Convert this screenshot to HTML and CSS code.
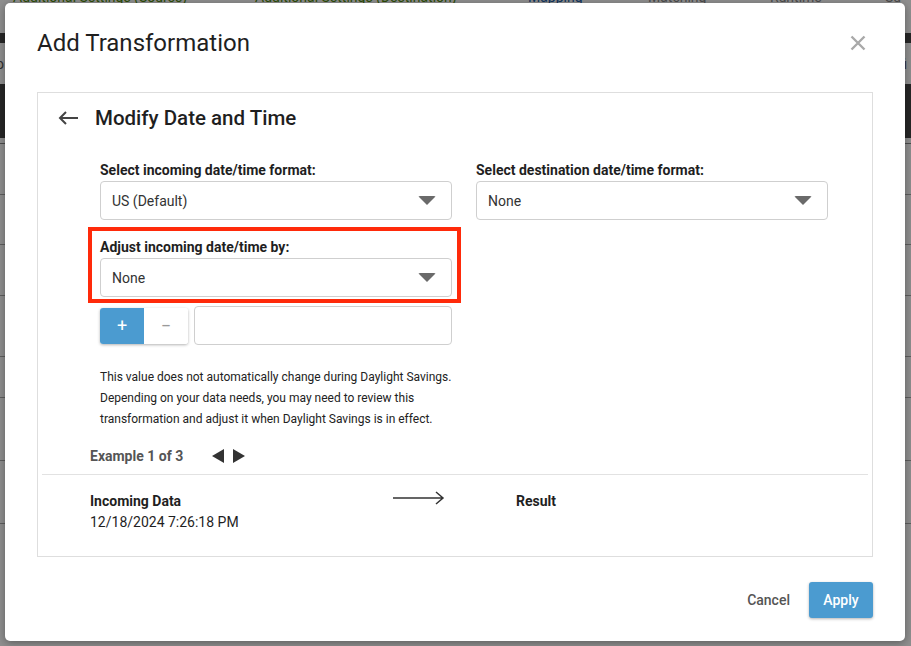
FILE: index.html
```html
<!DOCTYPE html>
<html>
<head>
<meta charset="utf-8">
<link rel="stylesheet" href="styles.css">
</head>
<body>
<div class="page">
  <div class="tabs">
    <span class="tab tab-green t1">Additional Settings (Source)</span>
    <span class="tab tab-green t2">Additional Settings (Destination)</span>
    <span class="tab tab-blue t3">Mapping</span>
    <span class="tab tab-gray t4">Matching</span>
    <span class="tab tab-gray t5">Runtime</span>
    <span class="tab tab-gray t6">Su</span>
  </div>
  <div class="darkbar thin"></div>
  <div class="subrow"><span>o</span><span>fi</span></div>
  <div class="darkbar thick"></div>
  <div class="rows">
    <div class="row r1"></div>
    <div class="row r2"></div>
    <div class="row r3"></div>
    <div class="row r4"></div>
    <div class="row r5"></div>
    <div class="row r6"></div>
    <div class="row r7"></div>
    <div class="row r8"></div>
  </div>
</div>
<div class="overlay"></div>

<div class="modal">
  <div class="modal-header">
    <h1 class="modal-title">Add Transformation</h1>
    <button class="close-btn" aria-label="Close">
      <svg width="16" height="16" viewBox="0 0 16 16"><path d="M1.5 1.5 L14.5 14.5 M14.5 1.5 L1.5 14.5" stroke="#a9a9a9" stroke-width="2.4" fill="none"/></svg>
    </button>
  </div>

  <div class="card">
    <div class="card-head">
      <svg class="back" width="21" height="14" viewBox="0 0 21 14"><path d="M20 7 H2 M8 1 L2 7 L8 13" stroke="#444" stroke-width="2" fill="none"/></svg>
      <h2 class="card-title">Modify Date and Time</h2>
    </div>

    <div class="form">
      <div class="col">
        <div class="field">
          <label class="lbl">Select incoming date/time format:</label>
          <div class="select"><span>US (Default)</span><i class="caret"></i></div>
        </div>
        <div class="field highlight-wrap">
          <label class="lbl">Adjust incoming date/time by:</label>
          <div class="select"><span>None</span><i class="caret"></i></div>
          <div class="highlight"></div>
        </div>
        <div class="adjust-row">
          <div class="toggle">
            <span class="tg tg-on">+</span>
            <span class="tg tg-off">−</span>
          </div>
          <div class="input"></div>
        </div>
        <p class="help">This value does not automatically change during Daylight Savings. Depending on your data needs, you may need to review this transformation and adjust it when Daylight Savings is in effect.</p>
      </div>
      <div class="col">
        <div class="field">
          <label class="lbl">Select destination date/time format:</label>
          <div class="select"><span>None</span><i class="caret"></i></div>
        </div>
      </div>
    </div>

    <div class="example">
      <span class="ex-label">Example 1 of 3</span>
      <span class="ex-nav">
        <svg width="12" height="14" viewBox="0 0 12 14"><path d="M12 0 V14 L0 7 Z" fill="#333"/></svg>
        <svg width="12" height="14" viewBox="0 0 12 14"><path d="M0 0 V14 L12 7 Z" fill="#333"/></svg>
      </span>
    </div>

    <div class="divider"></div>

    <div class="data-row">
      <div class="data-col incoming">
        <div class="data-title">Incoming Data</div>
        <div class="data-value">12/18/2024 7:26:18 PM</div>
      </div>
      <svg class="long-arrow" width="52" height="14" viewBox="0 0 52 14"><path d="M0 7 H50 M43 1 L50 7 L43 13" stroke="#333" stroke-width="1.5" fill="none"/></svg>
      <div class="data-col">
        <div class="data-title">Result</div>
      </div>
    </div>
  </div>

  <div class="modal-footer">
    <button class="btn-cancel">Cancel</button>
    <button class="btn-apply">Apply</button>
  </div>
</div>
</body>
</html>
```

FILE: styles.css
```css
* { box-sizing: border-box; }
html, body { margin: 0; padding: 0; }
body {
  width: 911px;
  height: 646px;
  overflow: hidden;
  font-family: Roboto, "Liberation Sans", Arial, sans-serif;
  position: relative;
  background: #fff;
}

/* background page */
.page { width: 911px; }
.tabs {
  height: 33px;
  position: relative;
  overflow: hidden;
}
.tab {
  position: absolute;
  top: -12px;
  font-size: 14px;
  line-height: 18px;
  white-space: nowrap;
}
.tab-green { color: #4e8a0a; }
.tab-blue { color: #1d5fa8; }
.tab-gray { color: #888; }
.t1 { left: 13px; }
.t2 { left: 255px; }
.t3 { left: 528px; }
.t4 { left: 648px; }
.t5 { left: 770px; }
.t6 { left: 885px; }
.darkbar { background: #454545; }
.darkbar.thin { height: 10px; }
.darkbar.thick { height: 54px; }
.subrow {
  height: 41px;
  display: flex;
  justify-content: space-between;
  align-items: center;
  padding: 0 4px 0 0;
  font-size: 14px;
  color: #555;
  margin-left: -4px;
}
.row { border-bottom: 1px solid #aaa; }
.r1 { height: 6px; border-bottom: 1px solid #888; }
.r2 { height: 51px; }
.r3 { height: 50px; }
.r4 { height: 51px; }
.r5 { height: 61px; }
.r6 { height: 41px; }
.r7 { height: 63px; }
.r8 { height: 63px; }

.overlay {
  position: absolute;
  inset: 0;
  background: rgba(0, 0, 0, 0.44);
}

/* modal */
.modal {
  position: absolute;
  left: 5px;
  top: 3px;
  width: 900px;
  height: 638px;
  background: #fff;
  border-radius: 5px;
  box-shadow: 0 2px 8px rgba(0,0,0,0.35);
  display: flex;
  flex-direction: column;
}
.modal-header {
  display: flex;
  align-items: center;
  justify-content: space-between;
  padding: 25px 39px 0 32px;
  height: 54px;
}
.modal-title {
  margin: 0;
  font-size: 24px;
  font-weight: 400;
  line-height: 30px;
  color: #1f1f1f;
}
.close-btn {
  border: 0;
  background: none;
  padding: 0;
  width: 16px;
  height: 16px;
  display: flex;
}

.card {
  margin: 35px 32px 0 32px;
  border: 1px solid #dedede;
  height: 465px;
  display: flex;
  flex-direction: column;
}
.card-head {
  display: flex;
  align-items: center;
  height: 28px;
  margin-top: 11px;
  padding-left: 20px;
}
.back { margin-right: 16px; }
.card-title {
  margin: 0;
  font-size: 20.5px;
  font-weight: 500;
  color: #1f1f1f;
  line-height: 28px;
}

.form {
  display: grid;
  grid-template-columns: 352px 352px;
  column-gap: 24px;
  padding-left: 62px;
  margin-top: 30px;
}
.col { display: flex; flex-direction: column; }
.field { display: flex; flex-direction: column; }
.field + .field { margin-top: 19px; }
.lbl {
  font-size: 14px;
  font-weight: 700;
  line-height: 16px;
  color: #1f1f1f;
  margin-bottom: 3px;
}
.select {
  height: 39px;
  border: 1px solid #cfcfcf;
  border-radius: 4px;
  display: flex;
  align-items: center;
  justify-content: space-between;
  padding: 0 15px 0 11px;
  font-size: 14px;
  color: #333;
}
.caret {
  width: 0;
  height: 0;
  border-left: 9px solid transparent;
  border-right: 9px solid transparent;
  border-top: 9px solid #6a6a6a;
  border-radius: 2px;
}

.highlight-wrap { position: relative; }
.highlight {
  position: absolute;
  left: -12px;
  right: -9px;
  top: -12px;
  bottom: -6px;
  border: 4.5px solid #ff2a0a;
  pointer-events: none;
}

.adjust-row {
  display: flex;
  align-items: center;
  gap: 6px;
  margin-top: 9px;
}
.toggle {
  display: flex;
  width: 88px;
  height: 36px;
  border-radius: 3px;
  box-shadow: 0 1px 3px rgba(0,0,0,0.3);
  overflow: hidden;
}
.tg {
  flex: 1;
  display: flex;
  align-items: center;
  justify-content: center;
  font-size: 18px;
}
.tg-on { background: #4b9bd0; color: #fff; }
.tg-off { background: #fff; color: #9a9a9a; }
.input {
  flex: 1;
  height: 39px;
  border: 1px solid #cfcfcf;
  border-radius: 4px;
}

.help {
  margin: 22px 0 0 0;
  font-size: 12px;
  line-height: 21px;
  color: #222;
}

.example {
  display: flex;
  align-items: center;
  margin-top: 16px;
  padding-left: 52px;
  height: 20px;
}
.ex-label {
  font-size: 14px;
  font-weight: 700;
  color: #555;
}
.ex-nav {
  display: flex;
  gap: 9px;
  margin-left: 29px;
}

.divider {
  height: 1px;
  background: #e2e2e2;
  margin: 8px 4px 0 4px;
}

.data-row {
  display: flex;
  align-items: flex-start;
  margin-top: 16px;
  padding-left: 52px;
}
.data-col { display: flex; flex-direction: column; }
.incoming { width: 303px; }
.long-arrow { margin-top: 0px; margin-right: 71px; }
.data-title {
  font-size: 14px;
  font-weight: 700;
  line-height: 20px;
  color: #1f1f1f;
}
.data-value {
  font-size: 14px;
  line-height: 20px;
  color: #1f1f1f;
  margin-top: 1px;
}

.modal-footer {
  display: flex;
  justify-content: flex-end;
  align-items: center;
  gap: 19px;
  padding: 25px 32px 0 0;
}
.btn-cancel {
  border: 0;
  background: none;
  padding: 0;
  font-family: inherit;
  font-size: 14px;
  font-weight: 500;
  color: #555;
}
.btn-apply {
  border: 0;
  background: #4b9bd0;
  color: #fff;
  font-family: inherit;
  font-size: 14px;
  font-weight: 500;
  width: 64px;
  height: 36px;
  border-radius: 3px;
  box-shadow: 0 1px 3px rgba(0,0,0,0.3);
}
```
